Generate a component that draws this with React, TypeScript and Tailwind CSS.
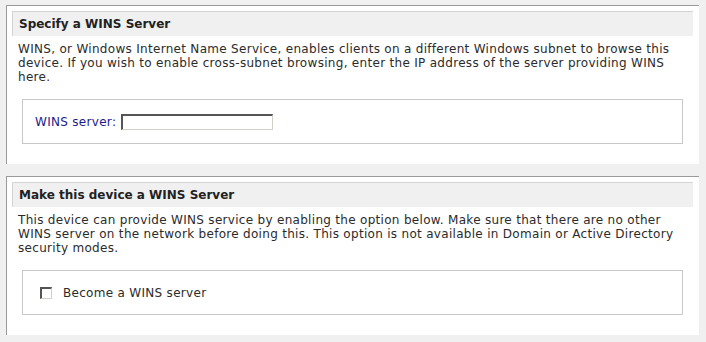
export default function App() {
  return (
    <div className="min-h-[342px] bg-[#f0f0f0] pl-[6px] pr-[7px] pt-[5px] font-['DejaVu_Sans',sans-serif] text-[12px] tracking-[0.3px] text-[#2b2b2b]">
      <section className="border-l border-t border-[#9a9a9a] bg-white pb-[20px] pl-[5px] pr-[6px] pt-[5px]">
        <h2 className="flex h-[25px] items-center border-l border-t border-[#d4d4d4] bg-[#f0f0f0] px-[6px] font-bold tracking-normal text-[#222]">
          Specify a WINS Server
        </h2>
        <p className="px-[6px] pt-[6px] leading-[14px]">
          WINS, or Windows Internet Name Service, enables clients on a different Windows subnet to browse this device. If you wish to enable cross-subnet browsing, enter the IP address of the server providing WINS here.
        </p>
        <div className="mx-[10px] mt-[15px] flex h-[45px] items-center border border-[#c8c8c8] pl-[12px]">
          <label className="text-[#1c1c8c]">WINS server:</label>
          <input
            type="text"
            className="ml-[5px] h-[16px] w-[152px] border-b border-l-2 border-r border-t-2 border-b-[#d4d0c8] border-l-[#555] border-r-[#d4d0c8] border-t-[#555] bg-white outline-none"
          />
        </div>
      </section>

      <section className="mt-[12px] border-l border-t border-[#9a9a9a] bg-white pb-[20px] pl-[5px] pr-[6px] pt-[5px]">
        <h2 className="flex h-[25px] items-center border-l border-t border-[#d4d4d4] bg-[#f0f0f0] px-[6px] font-bold tracking-normal text-[#222]">
          Make this device a WINS Server
        </h2>
        <p className="px-[6px] pt-[6px] leading-[14px]">
          This device can provide WINS service by enabling the option below. Make sure that there are no other WINS server on the network before doing this. This option is not available in Domain or Active Directory security modes.
        </p>
        <div className="mx-[10px] mt-[15px] flex h-[45px] items-center border border-[#c8c8c8] pl-[17px]">
          <span className="h-[12px] w-[12px] border-b border-l-2 border-r border-t-2 border-b-[#d4d0c8] border-l-[#555] border-r-[#d4d0c8] border-t-[#555] bg-white" />
          <span className="ml-[11px]">Become a WINS server</span>
        </div>
      </section>
    </div>
  );
}
